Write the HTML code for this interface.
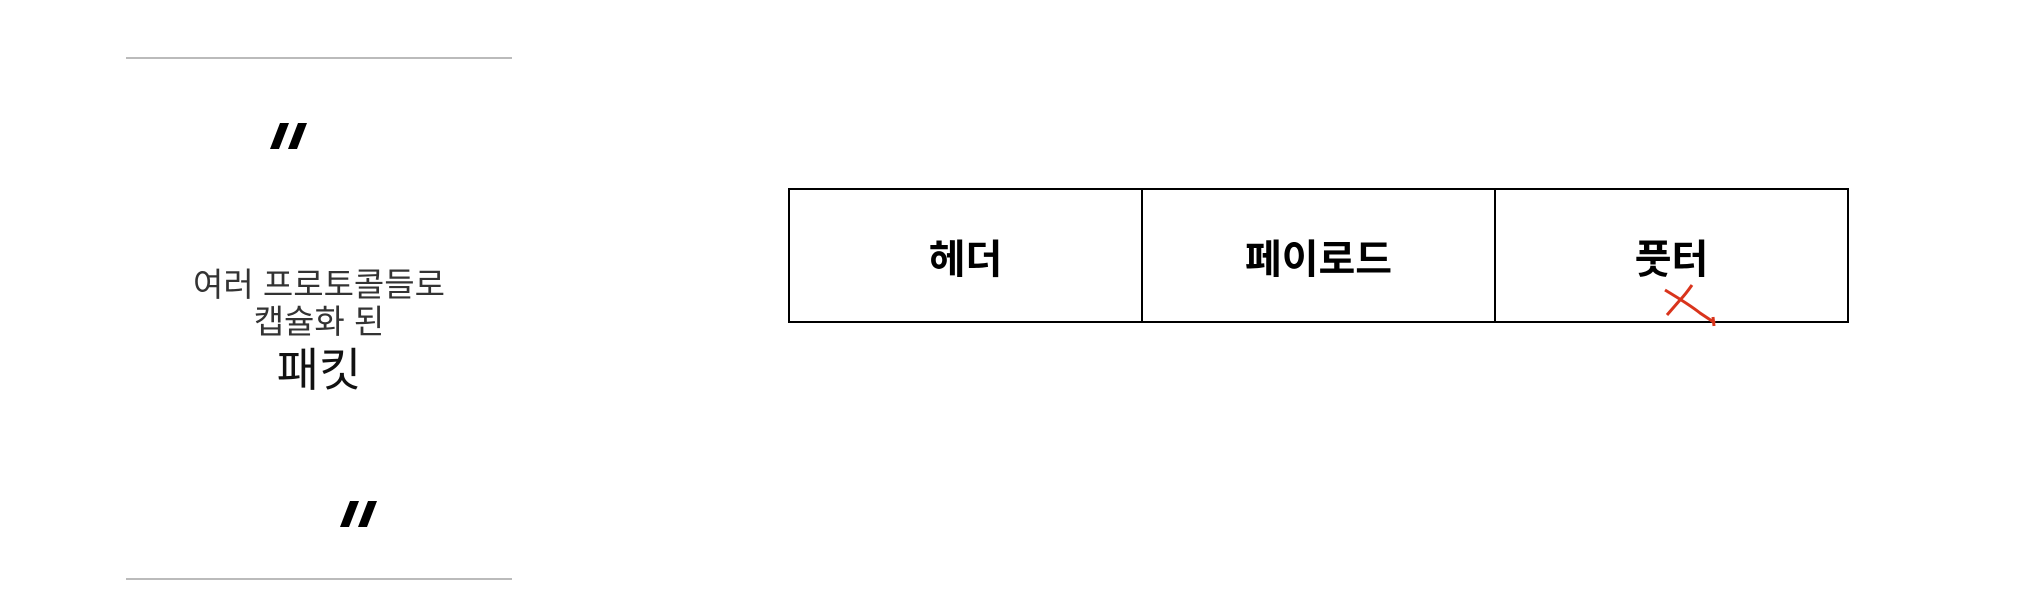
<!DOCTYPE html>
<html><head><meta charset="utf-8"><style>
body{margin:0;width:2018px;height:616px;background:#fff;position:relative;overflow:hidden;font-family:"Liberation Sans","Noto Sans CJK KR",sans-serif}
.hr{position:absolute;left:126px;width:386px;height:2px;background:#bbb}
.t{position:absolute;left:126px;width:386px;text-align:center;color:#333;white-space:nowrap}
.tbl{position:absolute;left:788px;top:188px;width:1057px;height:131px;border:2px solid #000;display:flex}
.tbl div{flex:1;display:flex;align-items:center;justify-content:center;font-weight:bold;font-size:40px;color:#000;box-sizing:border-box}
.tbl div+div{border-left:2px solid #000}
</style></head><body>
<div class="hr" style="top:57px"></div>
<div class="hr" style="top:578px"></div>
<div class="t" style="top:267px;font-size:33px;line-height:36px">여러 프로토콜들로</div>
<div class="t" style="top:304px;font-size:33px;line-height:36px">캡슐화 된</div>
<div class="t" style="top:345px;font-size:46px;line-height:50px;color:#111">패킷</div>
<div class="tbl"><div>헤더</div><div>페이로드</div><div>풋터</div></div>
<svg style="position:absolute;left:0;top:0" width="2018" height="616">
<polygon points="280,123 289,123 279,149 270,149" fill="#000"/>
<polygon points="298,123 307,123 297,149 288,149" fill="#000"/>
<polygon points="350,501 359,501 349,527 340,527" fill="#000"/>
<polygon points="368,501 377,501 367,527 358,527" fill="#000"/>
<path d="M1665 290 Q1690 305 1700 313 L1715 323 M1692 285 Q1685 295 1680 300 L1667 315 M1713 317 L1714 326" stroke="#d9341c" stroke-width="3" fill="none"/>
</svg>
</body></html>
